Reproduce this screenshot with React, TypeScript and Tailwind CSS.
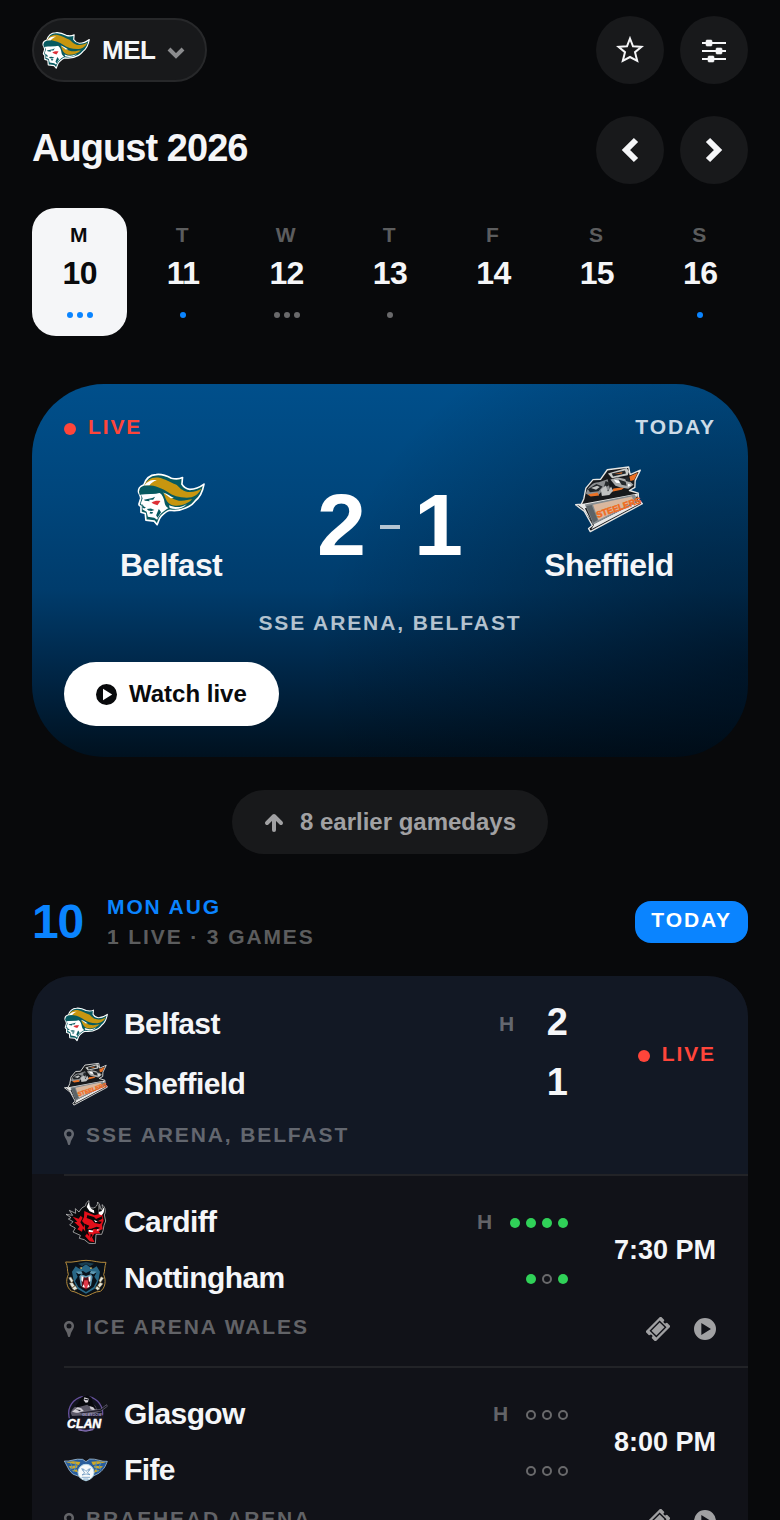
import React from "react";

type LogoProps = { className?: string };

function BelfastLogo({ className }: LogoProps) {
  return (
    <svg viewBox="54 14 206 206" className={className} aria-hidden="true">
      <path
        d="M75 74C62 78 57 88 59 97C62 104 66 108 65 116L60 132C59 137 63 138 66 139L66 157L79 161L81 181L106 184L115 195C119 187 120 176 128 168C136 160 145 152 154 151C172 154 190 151 211 140C221 135 226 128 230 123C238 117 252 100 257 72C244 82 228 88 214 88C202 86 194 79 190 72C191 65 191 58 192 52C180 58 169 57 158 54C143 46 128 41 112 43C92 44 80 57 75 74Z"
        fill="#075a60"
        stroke="#fff"
        strokeWidth="5"
        strokeLinejoin="round"
      />
      <path d="M76 76C82 60 100 49 118 52C140 56 155 68 172 73C182 79 184 88 202 94C219 99 237 93 249 85C241 104 224 113 205 113C181 113 162 107 147 96C130 84 102 72 76 76Z" fill="#c8960f" />
      <path d="M134 99C149 105 160 119 181 122C196 124 210 119 221 118C208 132 184 140 166 137C154 135 145 126 141 116Z" fill="#c8960f" />
      <path d="M76 76C88 60 102 58 114 60C104 63 98 68 92 75ZM133 97C148 101 156 110 166 114L156 115ZM151 136C171 145 192 142 205 132C193 147 171 151 153 144Z" fill="#fff" />
      <path d="M63 98C79 99 99 104 123 99C131 104 136 115 138 130C139 137 144 142 149 145C134 153 121 164 115 180L106 174L87 171L83 156L71 149L70 135L65 132L71 115Z" fill="#fff" />
      <path d="M60 94C74 80 101 81 127 89L126 97C106 103 84 101 62 104Z" fill="#075a60" />
      <path d="M75 119L100 114L109 110L103 119L91 119L92 124L78 122ZM70 132L75 140L81 143L76 146L70 143ZM84 147L96 146L107 150L98 153L88 152ZM94 156L103 157L100 162L92 161ZM120 147L112 166L116 174L127 157L123 151Z" fill="#075a60" />
      <path d="M98 128C106 122 115 122 125 123L116 136L105 132Z" fill="#dd3037" />
    </svg>
  );
}

function SheffieldLogo({ className }: LogoProps) {
  return (
    <svg viewBox="50 33 200 200" className={className} aria-hidden="true">
      <path d="M52 150L69 148L76 132L82 101L103 76L125 75L145 47L208 39L212 61L242 48L227 79L226 99L210 108L236 116L237 135L248 147L95 229L90 220L101 211L78 170Z" fill="#17191c" stroke="#e7e7e5" strokeWidth="4" strokeLinejoin="round" />
      <path d="M58 150L235 117L234 126L79 160L103 207L235 141L241 146L98 222L106 209L73 161Z" fill="#e8e8e7" />
      <path d="M79 149L226 120L236 140L104 208Z" fill="#858b8f" />
      <path d="M83 154L99 151L117 195L104 203Z" fill="#5b6367" />
      <path d="M103 150L217 126L224 142L119 195Z" fill="#d9b79e" />
      <text x="116" y="189" transform="rotate(-19 116 189)" fill="#f06b20" stroke="#f06b20" strokeWidth="1.5" fontFamily="'Liberation Sans Narrow', 'Liberation Sans', sans-serif" fontSize="26" fontWeight="700">STEELERS</text>
      <path d="M82 117C88 97 103 83 120 84L146 75L153 105L129 110L119 121L90 122Z" fill="#8b8e91" />
      <path d="M88 104L113 89L131 96L119 110L94 113Z" fill="#202428" />
      <path d="M97 101L115 94L123 98L112 106Z" fill="#c1c3c2" />
      <path d="M147 58L202 42L209 52L205 63L159 72Z" fill="#c8cac8" />
      <path d="M158 58L197 49L200 58L162 67Z" fill="#22272a" />
      <path d="M165 59L190 54L187 59Z" fill="#df6c25" />
      <path d="M210 67L235 55L224 77L213 80ZM88 120L116 114L121 123L96 126ZM163 102L198 98L187 106L158 112Z" fill="#ed7225" />
      <path d="M154 76L176 70L205 76L222 91L207 103L185 99L169 94Z" fill="#a8aaaa" />
      <path d="M178 76L199 82L202 94L187 91ZM140 80L153 85L148 95L135 98ZM196 70L208 68L212 84L200 80Z" fill="#24282b" />
      <path d="M126 106L140 93L147 111L156 96L162 109L151 121L129 124Z" fill="#bfc1c1" />
      <path d="M164 76L179 79L183 87L171 85ZM206 88L216 92L206 97Z" fill="#fff" />
    </svg>
  );
}

function CardiffLogo({ className }: LogoProps) {
  return (
    <svg viewBox="42 59 132 132" className={className} aria-hidden="true">
      <path d="M91 89C96 80 102 80 107 76C107 68 113 63 117 61C116 70 118 79 124 83C134 84 139 80 142 72L143 65C150 72 151 81 153 88C158 85 158 80 156 73C167 80 168 94 163 104L167 122L162 135L159 151L155 162L138 162L136 190L117 189L103 178L88 174L91 165L69 155L76 143L59 134L69 124L55 116L63 112L48 102L68 105L58 90L77 99L76 85L87 95Z" fill="#08090b" stroke="#d8d8d8" strokeWidth="2" />
      <path d="M68 109L86 115L92 106L98 112L91 126L100 140L96 154L82 147L88 139L73 126L82 124Z" fill="#e30f1a" />
      <path d="M103 92L122 100L134 105L156 99L158 108L161 121L156 134L158 146L146 152L151 159L133 160L126 171L134 186L119 183L105 167L111 160L98 144L105 132L96 122L102 110Z" fill="#e30f1a" />
      <path d="M110 80L116 66C117 78 123 87 132 90L133 99L119 93ZM146 72C150 79 149 88 145 95L154 93L162 81C164 91 161 101 154 105L146 101Z" fill="#fff" />
      <path d="M112 104L132 110L138 116L156 108L157 115L143 123L156 124L150 131L134 128L126 119L110 113ZM104 130L118 136L112 146L124 145L140 139L150 142L142 147L130 146L124 156L113 153L118 168L106 156ZM122 160L128 164L121 173Z" fill="#090707" />
      <path d="M132 118L143 124L136 126ZM116 148L131 151L127 156L116 154ZM142 147L150 149L140 151Z" fill="#fff" />
    </svg>
  );
}

function NottinghamLogo({ className }: LogoProps) {
  return (
    <svg viewBox="42 227 132 132" className={className} aria-hidden="true">
      <path d="M47 245C70 248 86 240 108 240C130 240 148 248 168 246C163 260 165 272 161 283C169 300 166 323 151 333C134 333 121 345 108 348C91 345 79 334 64 332C50 322 46 300 55 283C51 269 54 259 47 245Z" fill="#0a1118" stroke="#b58b3c" strokeWidth="3" />
      <path d="M66 274L77 258L89 266L108 252L127 266L140 258L150 274L145 301L134 325L108 340L82 325L71 301Z" fill="#286786" />
      <path d="M84 250L108 245L132 250L120 258L108 250L96 258Z" fill="#1b3f52" />
      <path d="M78 277L99 272L108 278L120 272L139 277L133 289L141 301L131 320L108 335L85 320L75 302L83 289Z" fill="#08111b" />
      <path d="M77 274L94 273L98 280L85 281ZM119 279L123 272L140 274L131 282ZM88 288L93 282L108 287L123 282L128 289L123 316L108 325L92 316Z" fill="#5e9ab5" />
      <path d="M94 288L107 292L121 288L119 321L108 328L96 321Z" fill="#5c0d16" />
      <path d="M103 300L113 300L116 318L108 325L100 318Z" fill="#e33a4b" />
      <path d="M94 287L101 289L98 305L94 300ZM115 289L122 287L121 302L117 305ZM97 320L101 312L105 322ZM111 322L115 312L119 320Z" fill="#fff" />
      <path d="M56 292L63 290L70 302L64 307ZM58 308L68 307L74 316L66 322ZM66 324L76 316L82 325L73 330ZM147 301L153 289L161 293L151 307ZM143 315L150 306L159 310L149 322ZM136 324L141 317L150 325L143 330Z" fill="#e2e7df" stroke="#907040" strokeWidth="1.5" />
      <path d="M88 263L95 260L96 266ZM120 266L122 260L128 264Z" fill="#e6bc59" />
    </svg>
  );
}

function GlasgowLogo({ className }: LogoProps) {
  return (
    <svg viewBox="42 66 132 132" className={className} aria-hidden="true">
      <circle cx="107" cy="130" r="51" fill="#11131e" stroke="#65509a" strokeWidth="4" />
      <path d="M62 128C68 112 82 104 95 98L120 98L136 108L146 126L116 136L66 138Z" fill="#5d5a68" />
      <path d="M84 100C90 84 100 74 114 76L126 84L128 100L140 117L124 114L112 104L98 108L84 112L74 110Z" fill="#08090d" />
      <path d="M103 82L116 86L114 97L107 98L101 91Z" fill="#d9d6dc" />
      <path d="M66 125L83 112L94 115L102 124L92 128L78 128ZM118 108L130 112L136 122L122 118Z" fill="#d2cfd5" />
      <path d="M103 86L115 88L113 91L104 90ZM76 118L92 120L90 124Z" fill="#22232e" />
      <path d="M86 127L151 118L170 104L172 109L152 124L95 131Z" fill="#171522" stroke="#8f8a9c" strokeWidth="1.5" />
      <path d="M56 145L162 136L158 174L51 178Z" fill="#171621" />
      <text x="97" y="139" fill="#aaa0cc" fontFamily="Liberation Sans, sans-serif" fontSize="11" fontWeight="700" fontStyle="italic">GLASGOW</text>
      <text x="51" y="174" fill="#fff" stroke="#fff" strokeWidth="1.5" fontFamily="Liberation Sans, sans-serif" fontSize="37" fontWeight="700" fontStyle="italic">CLAN</text>
      <path d="M85 180Q107 188 130 179" fill="none" stroke="#8c78bb" strokeWidth="3" />
    </svg>
  );
}

function FifeLogo({ className }: LogoProps) {
  return (
    <svg viewBox="42 234 132 132" className={className} aria-hidden="true">
      <path d="M43 273C61 276 75 264 98 268L108 275L119 267C138 265 154 276 172 274C167 286 164 295 156 301L148 309L132 317L108 333L86 319L68 312L58 301Z" fill="#285d9d" stroke="#bed9ec" strokeWidth="2" />
      <path d="M48 277L69 274L91 276L87 285ZM56 289L83 286L81 293L63 297ZM65 302L80 298L84 307ZM124 275L145 274L168 277L129 285ZM132 287L159 289L151 296L134 294ZM135 298L149 302L132 308Z" fill="#d0a926" />
      <path d="M60 278L67 290L62 299M75 277L77 292L70 305M153 277L148 289L152 299M139 277L137 292L144 306" fill="none" stroke="#4f8fbd" strokeWidth="3" />
      <circle cx="108" cy="307" r="24" fill="#f7fafb" stroke="#b6d8e9" strokeWidth="3" />
      <path d="M95 296L102 298L108 304L115 298L121 296L112 309L120 314L108 312L96 315L104 309ZM97 300H103M114 300H120M95 322H120M100 327H115" fill="none" stroke="#5488b7" strokeWidth="2" />
    </svg>
  );
}

function ChevronIcon({ className }: LogoProps) {
  return (
    <svg viewBox="0 0 18 26" className={className} aria-hidden="true">
      <path d="M15 3L5 13L15 23" fill="none" stroke="currentColor" strokeWidth="6" strokeLinejoin="miter" />
    </svg>
  );
}

function PlayIcon({ className }: LogoProps) {
  return (
    <svg viewBox="0 0 24 24" className={className} aria-hidden="true">
      <path fill="currentColor" fillRule="evenodd" d="M12 0a12 12 0 1 0 0 24a12 12 0 0 0 0-24ZM8 5.5L18.5 12L8 18.5Z" />
    </svg>
  );
}

function TicketIcon({ className }: LogoProps) {
  return (
    <svg viewBox="0 0 26 26" className={className} aria-hidden="true">
      <g transform="rotate(-45 13 13)">
        <path fill="currentColor" d="M2 6H24V10.5A2.5 2.5 0 0 0 24 15.5V20H2V15.5A2.5 2.5 0 0 0 2 10.5Z" stroke="currentColor" strokeWidth="1.5" strokeLinejoin="round" />
        <rect x="6" y="8.5" width="14" height="9" fill="none" stroke="#111218" strokeWidth="1.5" />
      </g>
    </svg>
  );
}

function PinIcon() {
  return (
    <svg viewBox="0 0 10 16" className="mt-1 h-4 w-[10px]" aria-hidden="true">
      <path fill="currentColor" fillRule="evenodd" d="M5 0C2 0 0 2.2 0 5C0 7.5 2 9.5 3 12L4 15.5Q5 16.5 6 15.5L7 12C8 9.5 10 7.5 10 5C10 2.2 8 0 5 0ZM5 2.5A2.5 2.5 0 1 1 5 7.5A2.5 2.5 0 0 1 5 2.5Z" />
    </svg>
  );
}

const caps = "text-[21px] font-bold tracking-[0.09em]";
const roundButton = "flex size-[68px] items-center justify-center rounded-full bg-[#18191b] text-[#f5f6f8]";

type Day = { letter: string; date: number; dots: number; mine?: boolean; selected?: boolean };

const days: Day[] = [
  { letter: "M", date: 10, dots: 3, mine: true, selected: true },
  { letter: "T", date: 11, dots: 1, mine: true },
  { letter: "W", date: 12, dots: 3 },
  { letter: "T", date: 13, dots: 1 },
  { letter: "F", date: 14, dots: 0 },
  { letter: "S", date: 15, dots: 0 },
  { letter: "S", date: 16, dots: 1, mine: true },
];

function DayButton({ day }: { day: Day }) {
  return (
    <button
      type="button"
      aria-pressed={!!day.selected}
      className={`flex h-32 flex-col items-center rounded-3xl pt-[14px] ${day.selected ? "bg-[#f5f6f8] text-[#090a0c]" : "text-[#f5f6f8]"}`}
    >
      <span className={`${caps} leading-[26px] ${day.selected ? "" : "text-white/35"}`}>{day.letter}</span>
      <span className="mt-1 text-[32px] font-bold leading-[42px] tracking-[-0.02em]">{day.date}</span>
      <span className="mt-[18px] flex gap-1">
        {Array.from({ length: day.dots }, (_, i) => (
          <span key={i} className={`size-[6px] rounded-full ${day.mine ? "bg-[#0a84ff]" : "bg-[#69696b]"}`} />
        ))}
      </span>
    </button>
  );
}

function LiveTag() {
  return (
    <span className={`flex items-center gap-3 text-[#ff453a] ${caps} leading-6`}>
      <span className="mt-1 size-3 rounded-full bg-[#ff453a]" />
      LIVE
    </span>
  );
}

type Side = {
  name: string;
  Logo: (props: LogoProps) => React.ReactElement;
  score?: number;
  form?: boolean[];
};

type Game = { home: Side; away: Side; venue: string; time?: string };

const games: Game[] = [
  {
    home: { name: "Belfast", Logo: BelfastLogo, score: 2 },
    away: { name: "Sheffield", Logo: SheffieldLogo, score: 1 },
    venue: "SSE ARENA, BELFAST",
  },
  {
    home: { name: "Cardiff", Logo: CardiffLogo, form: [true, true, true, true] },
    away: { name: "Nottingham", Logo: NottinghamLogo, form: [true, false, true] },
    venue: "ICE ARENA WALES",
    time: "7:30 PM",
  },
  {
    home: { name: "Glasgow", Logo: GlasgowLogo, form: [false, false, false] },
    away: { name: "Fife", Logo: FifeLogo, form: [false, false, false] },
    venue: "BRAEHEAD ARENA",
    time: "8:00 PM",
  },
];

function TeamRow({ side, home }: { side: Side; home?: boolean }) {
  const { Logo } = side;
  return (
    <div className={`flex items-center ${side.form ? "h-11" : "h-12"}`}>
      <Logo className="size-11" />
      <span className="ml-4 flex-1 text-[30px] font-bold leading-[44px] tracking-[-0.02em]">{side.name}</span>
      {home && <span className={`mr-4 text-white/35 ${caps}`}>H</span>}
      {side.form ? (
        <span className="mt-[2px] flex gap-[6px]">
          {side.form.map((won, i) => (
            <span key={i} className={`size-[10px] rounded-full ${won ? "bg-[#30d158]" : "border-2 border-[#69696b]"}`} />
          ))}
        </span>
      ) : (
        <span className="mb-1 min-w-9 text-right text-[38px] font-bold">{side.score}</span>
      )}
    </div>
  );
}

function GameRow({ game }: { game: Game }) {
  const live = !game.time;
  return (
    <li className={live ? "bg-[#121824]" : "bg-[#111218]"}>
      <div className="px-8 pb-[26px] pt-6">
        <div className="flex items-center">
          <div className="flex flex-1 flex-col gap-3">
            <TeamRow side={game.home} home />
            <TeamRow side={game.away} />
          </div>
          <div className="flex w-[148px] justify-end">
            {live ? <LiveTag /> : <time className="text-[27px] font-bold">{game.time}</time>}
          </div>
        </div>
        <div className={`mt-[14px] flex h-[26px] items-center text-white/35 ${caps}`}>
          <PinIcon />
          <span className="ml-3 flex-1">{game.venue}</span>
          {!live && (
            <span className="mt-1 flex items-center gap-6 text-[#a1a1a3]">
              <button type="button" aria-label="Tickets"><TicketIcon className="size-6" /></button>
              <button type="button" aria-label="Watch"><PlayIcon className="size-[22px]" /></button>
            </span>
          )}
        </div>
      </div>
    </li>
  );
}

function HeroTeam({ name, Logo }: { name: string; Logo: Side["Logo"] }) {
  return (
    <div className="flex flex-col items-center gap-3">
      <Logo className="size-[68px]" />
      <span className="text-[32px] font-bold leading-10 tracking-[-0.02em]">{name}</span>
    </div>
  );
}

export default function App() {
  return (
    <main className="h-screen overflow-hidden bg-[#08090b] px-8 pt-4 font-['Liberation_Sans',Arial,sans-serif] text-[#f5f6f8]">
      <header>
        <div className="flex items-center justify-between">
          <button type="button" className="flex h-16 items-center gap-3 rounded-full border-2 border-[#27282a] bg-[#18191b] pl-2 pr-5 text-[26px] font-bold tracking-[-0.02em]">
            <BelfastLogo className="size-12" />
            MEL
            <svg viewBox="0 0 18 13" className="mt-1 h-[13px] w-[18px] text-[#8b8c8e]" aria-hidden="true">
              <path d="M2 3L9 10L16 3" fill="none" stroke="currentColor" strokeWidth="4" />
            </svg>
          </button>
          <div className="flex gap-4">
            <button type="button" aria-label="Favourites" className={roundButton}>
              <svg viewBox="0 0 28 28" className="size-7" aria-hidden="true">
                <path d="M14 2.5L17 10.3L25.5 10.8L19 16.2L21.2 24.8L14 21L6.8 24.8L9 16.2L2.5 10.8L11 10.3Z" fill="none" stroke="currentColor" strokeWidth="2" strokeLinejoin="miter" />
              </svg>
            </button>
            <button type="button" aria-label="Filters" className={roundButton}>
              <svg viewBox="0 0 24 24" className="mt-[2px] size-6" aria-hidden="true">
                <path d="M0 4H24M0 12H24M0 20H24" stroke="currentColor" strokeWidth="2" />
                <path d="M5 1H9Q10 1 10 2V6Q10 7 9 7H5Q4 7 4 6V2Q4 1 5 1ZM15 9H19Q20 9 20 10V14Q20 15 19 15H15Q14 15 14 14V10Q14 9 15 9ZM7 17H11Q12 17 12 18V22Q12 23 11 23H7Q6 23 6 22V18Q6 17 7 17Z" fill="currentColor" stroke="currentColor" strokeWidth="0.6" />
              </svg>
            </button>
          </div>
        </div>
        <div className="mt-8 flex items-center justify-between">
          <h1 className="mb-1 text-[38px] font-bold tracking-tight">August 2026</h1>
          <div className="flex gap-4">
            <button type="button" aria-label="Previous week" className={roundButton}><ChevronIcon className="h-[26px] w-[18px]" /></button>
            <button type="button" aria-label="Next week" className={roundButton}><ChevronIcon className="h-[26px] w-[18px] rotate-180" /></button>
          </div>
        </div>
      </header>

      <nav aria-label="Days" className="mt-6 grid grid-cols-7 gap-2">
        {days.map((day) => <DayButton key={day.date} day={day} />)}
      </nav>

      <section className="mt-12 rounded-[72px] bg-[radial-gradient(ellipse_60%_100%_at_100%_75%,rgba(0,4,10,0.5),rgba(0,4,10,0)),linear-gradient(180deg,#004f8b_0%,#00467c_30%,#003c6c_55%,#00284a_75%,#00111f_100%)] px-8 pb-[31px] pt-[31px]">
        <div className="flex justify-between">
          <LiveTag />
          <span className={`${caps} leading-6 text-[#ccdbe7]`}>TODAY</span>
        </div>
        <div className="mt-[26px] grid grid-cols-[1fr_224px_1fr] items-center">
          <HeroTeam name="Belfast" Logo={BelfastLogo} />
          <div className="flex items-center justify-center text-[88px] font-bold leading-[120px] text-white">
            <span>2</span>
            <span className="mx-[14px] mt-1 h-1 w-5 bg-[#b3c4d2]" />
            <span>1</span>
          </div>
          <HeroTeam name="Sheffield" Logo={SheffieldLogo} />
        </div>
        <p className={`mt-[26px] text-center leading-6 text-[#b3c2cf] ${caps}`}>SSE ARENA, BELFAST</p>
        <button type="button" className="mt-[27px] flex h-16 items-center gap-3 rounded-full bg-white px-8 text-2xl font-bold text-[#090a0c]">
          <PlayIcon className="size-[21px]" />
          Watch live
        </button>
      </section>

      <button type="button" className="mx-auto mt-[33px] flex h-16 items-center gap-4 rounded-full bg-[#18191b] px-8 text-2xl font-bold text-[#a1a1a3]">
        <svg viewBox="0 0 20 20" className="mt-[2px] size-5" aria-hidden="true">
          <path d="M10 17V4M3 10L10 3L17 10" fill="none" stroke="currentColor" strokeWidth="4" strokeLinecap="round" strokeLinejoin="round" />
        </svg>
        8 earlier gamedays
      </button>

      <section>
        <div className="mt-[38px] flex items-center">
          <span className="text-5xl font-bold leading-[60px] tracking-tight text-[#0a84ff]">10</span>
          <div className={`ml-6 flex-1 text-white/35 ${caps}`}>
            <h2 className="leading-[30px] text-[#0a84ff]">MON AUG</h2>
            <p className="leading-[30px]">1 LIVE · 3 GAMES</p>
          </div>
          <span className={`flex h-[42px] items-center rounded-2xl bg-[#0a84ff] px-4 pb-1 text-white ${caps}`}>TODAY</span>
        </div>
        <ul className="mt-6 overflow-hidden rounded-t-[40px] bg-[#111218]">
          {games.map((game, i) => (
            <React.Fragment key={game.venue}>
              {i > 0 && <li role="separator" className="ml-8 h-[2px] bg-[#222327]" />}
              <GameRow game={game} />
            </React.Fragment>
          ))}
        </ul>
      </section>
    </main>
  );
}
